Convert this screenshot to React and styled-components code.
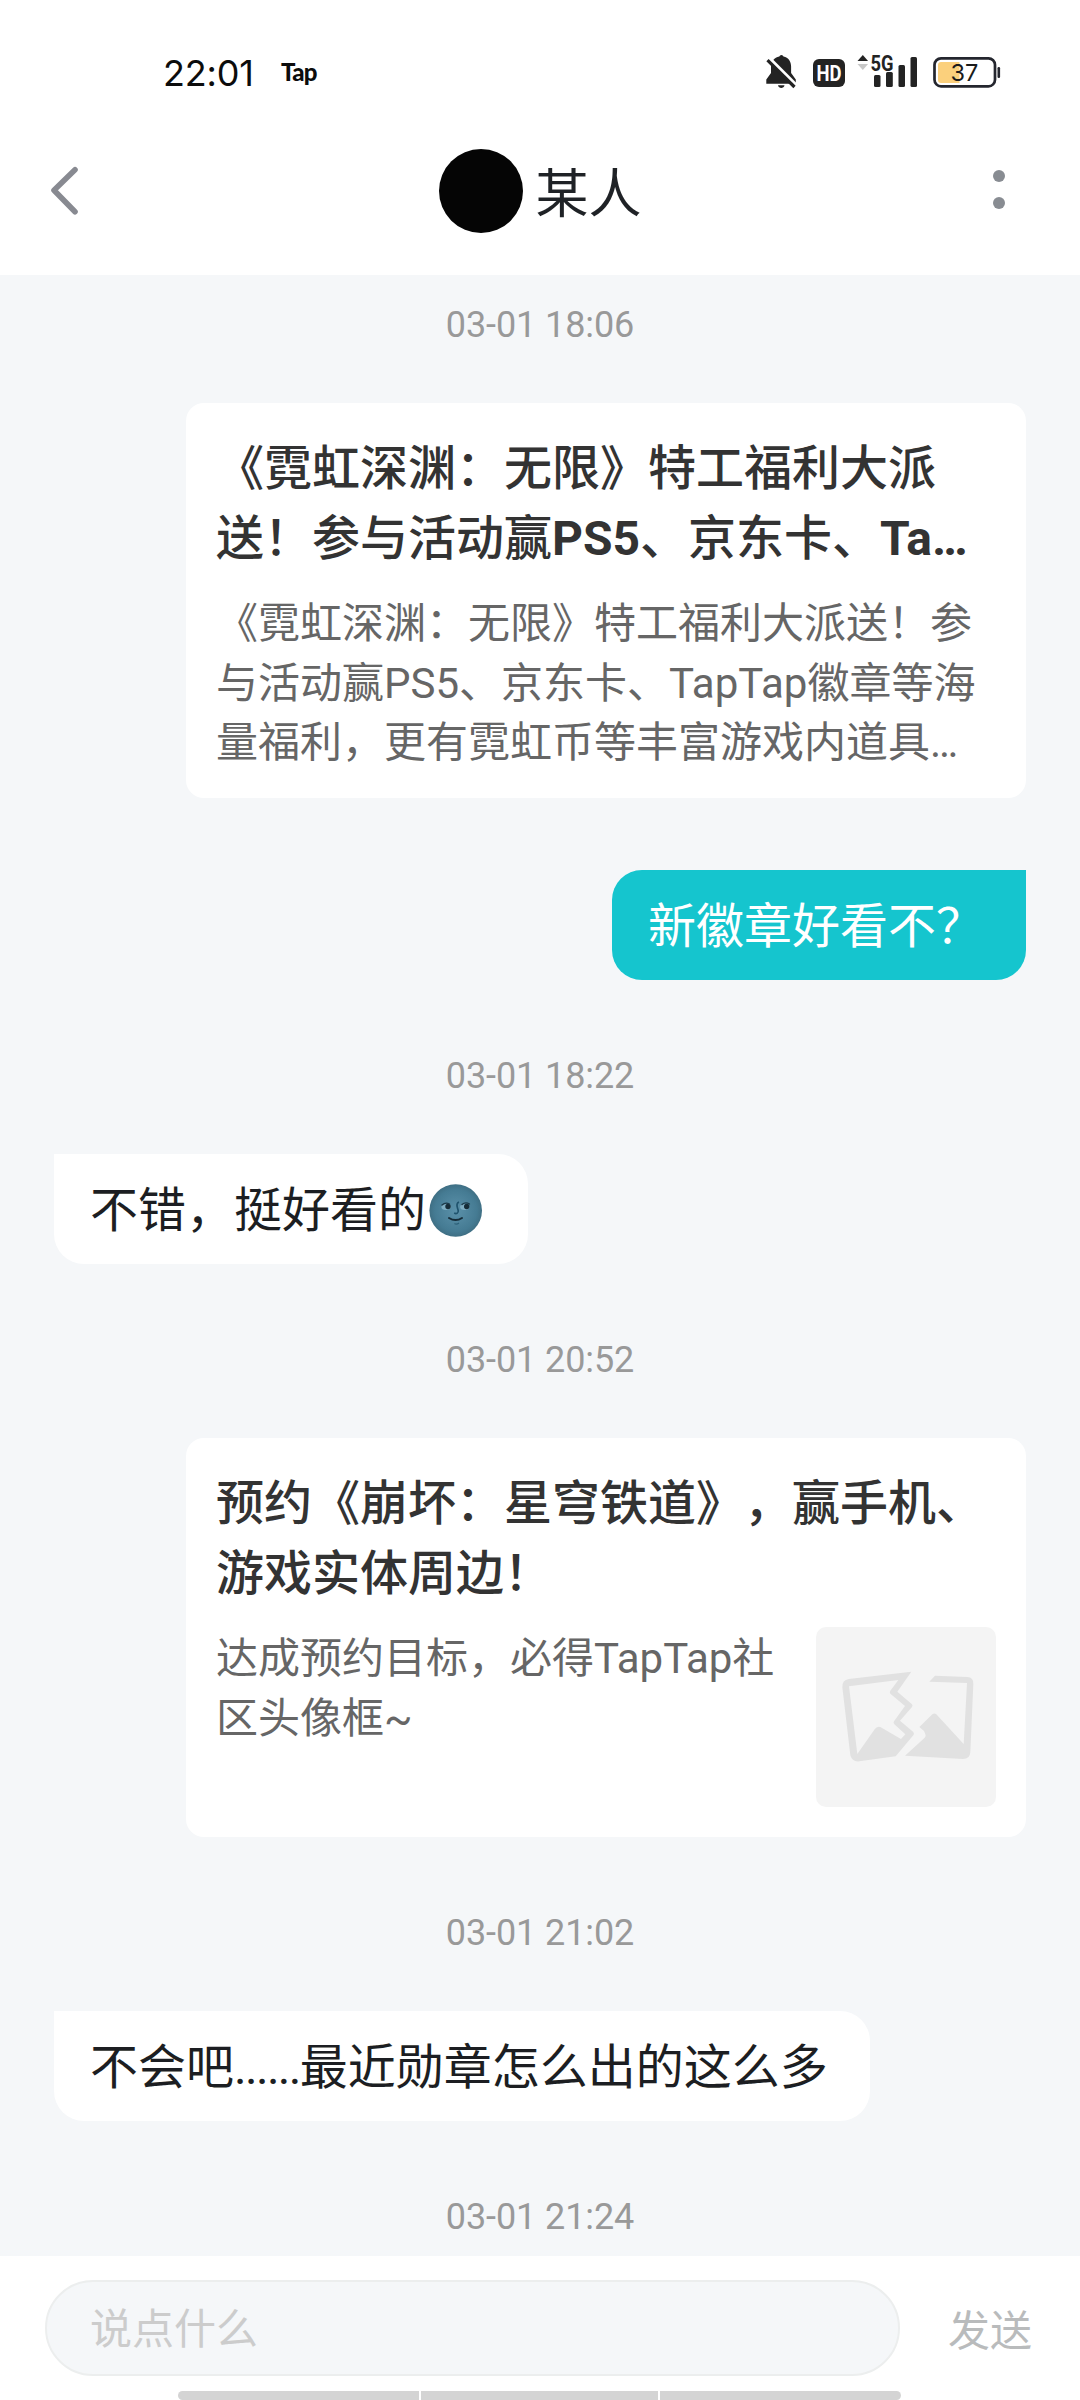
import React from 'react';
import styled, { createGlobalStyle } from 'styled-components';

const GlobalStyle = createGlobalStyle`
  * {
    box-sizing: border-box;
  }

  body {
    margin: 0;
    background: #fff;
    font-family: Roboto, 'Noto Sans CJK SC', sans-serif;
    text-spacing-trim: space-all;
  }
`;

const Screen = styled.div`
  display: flex;
  flex-direction: column;
  width: 1080px;
  height: 2400px;
  overflow: hidden;
  background: #fff;
`;

const StatusBar = styled.div`
  display: flex;
  align-items: center;
  height: 146px;
  padding: 0 79px 0 163px;
`;

const Clock = styled.span`
  width: 118px;
  font-family: Inter, sans-serif;
  font-size: 36px;
  line-height: 44px;
  letter-spacing: -0.2px;
  color: #0c0c0c;
`;

const Carrier = styled.span`
  flex: 1;
  padding-bottom: 2px;
  font-family: Lato, sans-serif;
  font-size: 24px;
  font-weight: 900;
  line-height: 28px;
  letter-spacing: -0.7px;
  color: #0c0c0c;
`;

const StatusIcons = styled.div`
  display: flex;
  align-items: center;
`;

const Header = styled.header`
  display: grid;
  grid-template-columns: 120px 1fr 120px;
  align-items: center;
  height: 129px;
  padding-bottom: 39px;
`;

const IconButton = styled.button`
  display: flex;
  align-items: center;
  justify-content: ${({ $end }) => ($end ? 'flex-end' : 'flex-start')};
  height: 84px;
  padding: ${({ $end }) => ($end ? '0 75px 0 0' : '0 0 0 49px')};
  border: none;
  background: transparent;
  cursor: pointer;
`;

const Peer = styled.div`
  display: flex;
  align-items: center;
  justify-content: center;
  gap: 13px;
`;

const Avatar = styled.div`
  width: 84px;
  height: 84px;
  border-radius: 50%;
  background: #050505;
`;

const PeerName = styled.h1`
  margin: 0;
  padding-top: 8px;
  font-size: 53px;
  font-weight: 400;
  line-height: 76px;
  color: #1f2226;
`;

const MessageList = styled.main`
  display: flex;
  flex: 1;
  flex-direction: column;
  min-height: 0;
  padding: 27px 54px 0;
  overflow: hidden;
  background: #f5f7f9;
`;

const Timestamp = styled.time`
  flex: none;
  margin-bottom: 55px;
  font-size: 36px;
  line-height: 46px;
  letter-spacing: -0.1px;
  text-align: center;
  color: #999;

  * + & {
    margin-top: 73px;
  }
`;

const Bubble = styled.div`
  display: flex;
  flex: none;
  align-items: center;
  align-self: ${({ $mine }) => ($mine ? 'flex-end' : 'flex-start')};
  height: 110px;
  margin-top: ${({ $mine }) => ($mine ? '72px' : '0')};
  padding: 3px 42px 0 36px;
  border-radius: ${({ $mine }) => ($mine ? '30px 0 30px 30px' : '0 30px 30px 30px')};
  font-size: 48px;
  line-height: 68px;
  white-space: nowrap;
  background: ${({ $mine }) => ($mine ? '#15c5ce' : '#fff')};
  color: ${({ $mine }) => ($mine ? '#fff' : '#1c1e22')};
`;

const Dots = styled.span`
  letter-spacing: -1.7px;
`;

const Card = styled.article`
  display: flex;
  flex: none;
  flex-direction: column;
  align-self: flex-end;
  gap: 20px;
  width: 840px;
  height: ${({ $height }) => $height}px;
  padding: 31px 30px 0;
  border-radius: 18px;
  background: #fff;
`;

const CardTitle = styled.h2`
  flex: none;
  margin: 0;
  font-size: 48px;
  font-weight: 500;
  line-height: 70px;
  color: #333;

  b {
    font-weight: 700;
  }
`;

const CardBody = styled.div`
  display: flex;
  gap: 36px;
`;

const CardText = styled.p`
  flex: 1;
  margin: 0;
  font-size: 42px;
  line-height: 59.5px;
  color: #666;
`;

const Thumb = styled.div`
  flex: none;
  width: 180px;
  height: 180px;
  margin-top: -2px;
  border-radius: 10px;
  overflow: hidden;
  background: #f4f4f4;
`;

const Footer = styled.footer`
  display: flex;
  flex: none;
  flex-direction: column;
  justify-content: space-between;
  height: 144px;
  padding-top: 24px;
  background: #fff;
`;

const Composer = styled.div`
  display: flex;
  align-items: center;
  padding-left: 45px;
`;

const Input = styled.input`
  flex: none;
  width: 855px;
  height: 96px;
  margin-right: 48px;
  padding: 3px 43px 0;
  border: 2px solid #eceeee;
  border-radius: 48px;
  font: 42px Roboto, 'Noto Sans CJK SC', sans-serif;
  background: #f5f7f9;

  &::placeholder {
    color: #ccc;
  }
`;

const SendButton = styled.button`
  padding: 0 0 2px;
  border: none;
  font: 42px Roboto, 'Noto Sans CJK SC', sans-serif;
  white-space: nowrap;
  background: transparent;
  color: #b9bbbc;
`;

const NavHint = styled.div`
  display: grid;
  grid-template-columns: 241px 237px 241px;
  gap: 2px;
  width: 723px;
  height: 9px;
  margin-left: 178px;
  border-radius: 5px;
  overflow: hidden;
`;

const NavSegment = styled.span`
  background: #d4d4d4;
`;

const StatusSvg = () => (
  <svg width="235" height="44" viewBox="766 51 235 44" fill="#232323">
    {/* muted bell */}
    <path d="M779.3 56.5a2.2 2.2 0 0 1 4.2 0c5 1.200 7.600 5 7.600 10v6.500l4.700 6.500v4.300H766.300v-4.300l4.700-6.500v-6.500c0-5 3.300-8.800 8.300-10z" />
    <path d="M778 85.200h6.500c-.6 3.600-5.900 3.600-6.500 0z" />
    <path d="M769.500 58.500l30 30" stroke="#fff" strokeWidth="3.500" />
    <path d="M767.500 60.200l27 26.800" stroke="#232323" strokeWidth="3.200" />

    <rect x="813" y="59" width="32" height="28" rx="6" />
    <text
      x="829"
      y="81"
      fill="#fff"
      fontFamily="Roboto, sans-serif"
      fontSize="22.500"
      fontWeight="700"
      textAnchor="middle"
      textLength="25"
      lengthAdjust="spacingAndGlyphs"
    >
      HD
    </text>

    <path d="M857.500 61l5.300-6 5.300 6z" />
    <path d="M857.500 64h10.600l-5.300 6z" fill="#c8c8c8" />
    <text
      x="870.500"
      y="70.600"
      fontFamily="Roboto, sans-serif"
      fontSize="21.500"
      fontWeight="700"
      textLength="23"
      lengthAdjust="spacingAndGlyphs"
    >
      5G
    </text>
    <rect x="874" y="75" width="6.500" height="12" rx="1.500" />
    <rect x="886" y="72" width="6.800" height="15" rx="1.500" />
    <rect x="898.500" y="65" width="6.500" height="22" rx="1.500" />
    <rect x="910.500" y="57" width="6.500" height="30" rx="1.500" />

    <rect x="934.500" y="58.300" width="60.500" height="28" rx="6.500" fill="#fff" stroke="#24262e" strokeWidth="2.700" />
    <path d="M941 62h18.500v21H941q-3 0-3-3V65q0-3 3-3z" fill="#fbd07c" />
    <rect x="997.500" y="67" width="2.600" height="11" rx="1.200" fill="#24262e" />
    <text x="964.500" y="81" fill="#1b1b1b" fontFamily="Inter, sans-serif" fontSize="23.500" textAnchor="middle">
      37
    </text>
  </svg>
);

const BackIcon = () => (
  <svg width="30" height="50" viewBox="0 0 30 50" fill="none">
    <path
      d="M26 3.800L5 24.200l21 21.500"
      stroke="#888a91"
      strokeWidth="5.600"
      strokeLinecap="round"
      strokeLinejoin="round"
    />
  </svg>
);

const MoreIcon = () => (
  <svg width="12" height="42" viewBox="0 0 12 42" fill="#888c92">
    <circle cx="6" cy="6" r="6" />
    <circle cx="6" cy="33" r="6" />
  </svg>
);

const MoonFace = () => (
  <svg width="60" height="60" viewBox="0 0 60 60" role="img" aria-label="🌚">
    <defs>
      <radialGradient id="moon" cx="50%" cy="50%" r="50%">
        <stop offset="0" stopColor="#5b91aa" />
        <stop offset="0.800" stopColor="#457b93" />
        <stop offset="1" stopColor="#3f6f84" />
      </radialGradient>
    </defs>
    <circle cx="29.700" cy="29.500" r="26.300" fill="url(#moon)" />
    <ellipse cx="20" cy="26" rx="4.600" ry="3" fill="#7fadc2" />
    <ellipse cx="38.700" cy="26" rx="4.600" ry="3" fill="#7fadc2" />
    <circle cx="22" cy="25.500" r="2.700" fill="#162c38" />
    <circle cx="40.700" cy="25.500" r="2.700" fill="#162c38" />
    <path
      d="M16 24q3.500-3.200 7.500-1M36 23.500q3.500-3 7.500-.5"
      fill="none"
      stroke="#1d3a49"
      strokeWidth="1.400"
      strokeLinecap="round"
    />
    <path d="M33 21c-4 1.500-1.500 5.500-.8 8.500.5 2.800-2 3.700-4 2.600" fill="none" stroke="#1f536d" strokeWidth="1.700" />
    <path d="M23 37q6.500 4.200 13 0" fill="none" stroke="#162c38" strokeWidth="2" strokeLinecap="round" />
    <path d="M28.500 42.500q2 1.500 4.500-.5" fill="none" stroke="#2c6078" strokeWidth="1.300" />
  </svg>
);

const BrokenImage = () => (
  <svg width="180" height="180" viewBox="108 81 540 540" fill="#e1e1e1">
    <path
      fillRule="evenodd"
      d="M394 215L352 275 396 313Q399 317 396 321L360 362 400 396Q404 401 400 406L347 469 238 484Q216 486 211 466L187 262Q186 240 206 237ZM207 259L232 462 284 388Q291 377 301 381L363 417 376 403 343 373Q339 369 342 364L375 318 331 281Q328 277 331 272L355 240Z"
    />
    <path d="M465 227L562 231Q581 232 580 252L571 456Q570 477 549 477L375 467 434 413Q439 408 436 403L432 393 418 381 457 343Q463 338 469 343L551 432 561 249 448 245Z" />
  </svg>
);

const App = () => {
  return (
    <>
      <GlobalStyle />
      <Screen>
        <StatusBar>
          <Clock>22:01</Clock>
          <Carrier>Tap</Carrier>
          <StatusIcons>
            <StatusSvg />
          </StatusIcons>
        </StatusBar>

        <Header>
          <IconButton>
            <BackIcon />
          </IconButton>
          <Peer>
            <Avatar />
            <PeerName>某人</PeerName>
          </Peer>
          <IconButton $end>
            <MoreIcon />
          </IconButton>
        </Header>

        <MessageList>
          <Timestamp>03-01 18:06</Timestamp>
          <Card $height={395}>
            <CardTitle>
              《霓虹深渊：无限》特工福利大派送！参与活动赢<b>PS5</b>、京东卡、<b>Ta…</b>
            </CardTitle>
            <CardBody>
              <CardText>
                《霓虹深渊：无限》特工福利大派送！参与活动赢PS5、京东卡、TapTap徽章等海量福利，更有霓虹币等丰富游戏内道具…
              </CardText>
            </CardBody>
          </Card>
          <Bubble $mine>新徽章好看不？</Bubble>

          <Timestamp>03-01 18:22</Timestamp>
          <Bubble>
            不错，挺好看的
            <MoonFace />
          </Bubble>

          <Timestamp>03-01 20:52</Timestamp>
          <Card $height={399}>
            <CardTitle>预约《崩坏：星穹铁道》，赢手机、游戏实体周边！</CardTitle>
            <CardBody>
              <CardText>达成预约目标，必得TapTap社区头像框~</CardText>
              <Thumb>
                <BrokenImage />
              </Thumb>
            </CardBody>
          </Card>

          <Timestamp>03-01 21:02</Timestamp>
          <Bubble>
            不会吧<Dots>......</Dots>最近勋章怎么出的这么多
          </Bubble>

          <Timestamp>03-01 21:24</Timestamp>
        </MessageList>

        <Footer>
          <Composer>
            <Input placeholder="说点什么" />
            <SendButton>发送</SendButton>
          </Composer>
          <NavHint>
            <NavSegment />
            <NavSegment />
            <NavSegment />
          </NavHint>
        </Footer>
      </Screen>
    </>
  );
};

export default App;
